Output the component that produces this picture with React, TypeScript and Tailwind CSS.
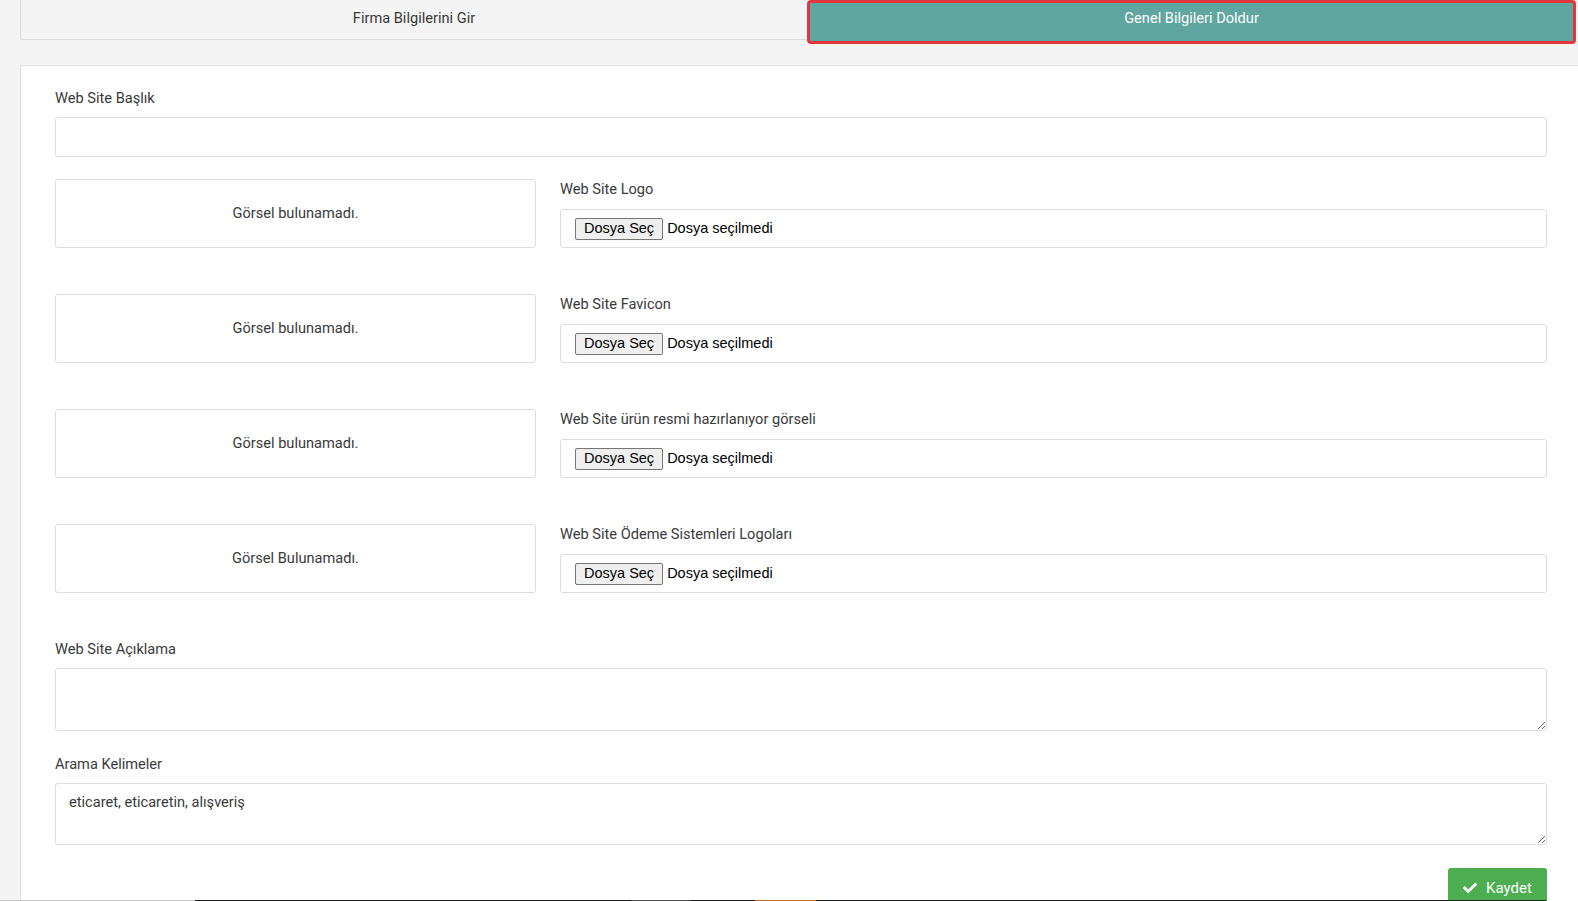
import React from "react";
import { FaCheck } from "react-icons/fa";

const imageRows = [
  { label: "Web Site Logo", empty: "Görsel bulunamadı." },
  { label: "Web Site Favicon", empty: "Görsel bulunamadı." },
  { label: "Web Site ürün resmi hazırlanıyor görseli", empty: "Görsel bulunamadı." },
  { label: "Web Site Ödeme Sistemleri Logoları", empty: "Görsel Bulunamadı." },
];

const FileBox: React.FC = () => (
  <div className="h-[39px] border border-[#dddddd] rounded-[3px] bg-white flex items-center pl-[14px] font-['Liberation_Sans',Arial,sans-serif] text-[14.5px] text-black">
    <span className="h-[22px] flex items-center px-[8px] border border-[#767676] rounded-[2px] bg-[#efefef]">
      Dosya Seç
    </span>
    <span className="ml-[4px]">Dosya seçilmedi</span>
  </div>
);

export default function App() {
  return (
    <div className="min-h-screen bg-[#f4f4f4] font-['Roboto',sans-serif] text-[14.6px] text-[#3a3a3a] overflow-hidden">
      {/* tabs */}
      <div className="flex items-start pl-[20px] h-[44px]">
        <div className="w-[787px] h-[40px] border-l border-b border-[#dddddd] rounded-bl-[3px] flex justify-center pt-[8px] leading-[20px]">
          Firma Bilgilerini Gir
        </div>
        <div className="w-[769px] h-[44px] bg-[#5fa5a0] border-[3px] border-[#e2373e] rounded-[4px] flex justify-center pt-[5px] leading-[20px] text-white">
          Genel Bilgileri Doldur
        </div>
      </div>

      {/* card */}
      <div className="ml-[20px] mt-[21px] bg-white border-l border-t border-[#dddddd] pl-[34px] pr-[31px] pt-[22px] pb-[20px]">
        <label className="block leading-[20px] mb-[9px]">Web Site Başlık</label>
        <input
          type="text"
          className="block w-full h-[40px] border border-[#dddddd] rounded-[3px] outline-none px-[12px]"
        />

        <div className="mt-[22px] flex flex-col gap-[46px]">
          {imageRows.map((row, idx) => (
            <div key={idx} className="flex gap-[24px] h-[69px]">
              <div className="w-[481px] h-[69px] border border-[#dddddd] rounded-[3px] flex items-center justify-center">
                {row.empty}
              </div>
              <div className="flex-1">
                <label className="block leading-[20px] mb-[10px]">{row.label}</label>
                <FileBox />
              </div>
            </div>
          ))}
        </div>

        <label className="block leading-[20px] mt-[46px] mb-[9px]">Web Site Açıklama</label>
        <textarea
          readOnly
          className="block w-full h-[63px] border border-[#dddddd] rounded-[3px] outline-none px-[13px] py-[8px] leading-[20px]"
        />

        <label className="block leading-[20px] mt-[23px] mb-[9px]">Arama Kelimeler</label>
        <textarea
          readOnly
          defaultValue="eticaret, eticaretin, alışveriş"
          className="block w-full h-[62px] border border-[#dddddd] rounded-[3px] outline-none px-[13px] py-[8px] leading-[20px] text-[#3a3a3a]"
        />

        <div className="flex justify-end mt-[23px]">
          <button className="w-[99px] h-[40px] bg-[#4cae50] rounded-[3px] text-white text-[15px] flex items-center justify-center gap-[9px]">
            <FaCheck className="w-[14px] h-[14px]" />
            Kaydet
          </button>
        </div>
      </div>

      {/* thin strip at the very bottom edge */}
      <div className="fixed bottom-0 left-0 right-0 h-px flex">
        <div className="w-[195px] bg-[#c8c8c8]" />
        <div className="w-[436px] bg-[#1f1f1f]" />
        <div className="w-[60px] bg-[#4a4a4a]" />
        <div className="w-[64px] bg-[#1f1f1f]" />
        <div className="w-[61px] bg-[#c8701e]" />
        <div className="w-[730px] bg-[#1f1f1f]" />
      </div>
    </div>
  );
}
